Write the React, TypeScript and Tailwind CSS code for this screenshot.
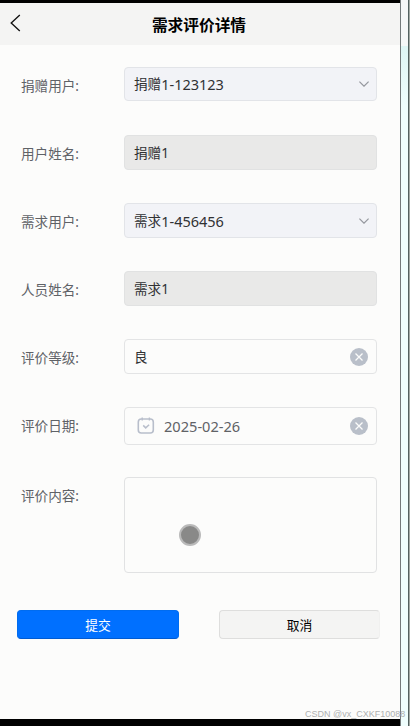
import type { ReactNode } from 'react';

function ClearIcon() {
  return (
    <svg className="block h-[18px] w-[18px] shrink-0" viewBox="0 0 18 18" fill="none">
      <circle cx="9" cy="9" r="9" fill="#b9bfc9" />
      <path d="M5.5 5.5l7 7M12.5 5.5l-7 7" stroke="#fcfcfb" strokeWidth="1.25" />
    </svg>
  );
}

function ChevronDown() {
  return (
    <svg className="block h-[6px] w-[10px] shrink-0" viewBox="0 0 10 6" fill="none">
      <path d="M.4.6L5 5.2 9.6.6" stroke="#94979d" strokeWidth="1.2" />
    </svg>
  );
}

function CalendarIcon() {
  return (
    <svg className="block h-[18px] w-[18px] shrink-0" viewBox="0 0 18 18" fill="none" stroke="#b8becb">
      <rect x="1.3" y="2" width="15" height="14" rx="3" strokeWidth="1.6" />
      <path d="M5.2 .6v3M12.4 .6v3" strokeWidth="1.4" />
      <path d="M6.2 8.4l2.5 2.5 3.4-3.2" strokeWidth="1.5" />
    </svg>
  );
}

function Row({ label, size, children }: { label: string; size: string; children: ReactNode }) {
  return (
    <div className={`flex items-start pl-[21px] ${size}`}>
      <label className="w-[103px] shrink-0 pt-[9px] text-[13.6px] leading-5 text-[#5f6267]">{label}</label>
      {children}
    </div>
  );
}

const box = 'flex w-[253px] items-center rounded-[4px] border text-[13.6px] text-[#303133] pl-[9px]';

function Value({ name, code }: { name: string; code?: string }) {
  return (
    <div className="flex flex-1 items-center leading-5">
      <span>{name}</span>
      {code && <span className="text-[14.5px]">{code}</span>}
    </div>
  );
}

export default function App() {
  return (
    <div className="relative flex h-[726px] w-[410px] overflow-hidden bg-[#effefd] font-['Noto_Sans','Noto_Sans_CJK_SC',sans-serif]">
      <main className="flex w-[400px] flex-col border-t-[3px] border-b-[7px] border-black bg-[#fcfcfb]">
        <header className="flex h-[42px] shrink-0 items-center bg-[#f4f4f3]">
          <svg className="mb-[2px] ml-[10px] block h-[18px] w-[11px]" viewBox="0 0 11 18" fill="none">
            <path d="M9.8 1L1.2 9l8.6 8" stroke="#111" strokeWidth="1.35" />
          </svg>
          <h1 className="flex-1 pt-[2px] pr-[23px] text-center text-[15.7px] leading-6 font-bold text-black">需求评价详情</h1>
        </header>

        <form className="flex flex-col pt-[22px]">
          <Row label="捐赠用户:" size="h-[68px]">
            <div className={`${box} h-[34px] border-[#e2e4e8] bg-[#f2f3f7] pr-[7px]`}>
              <Value name="捐赠" code="1-123123" />
              <ChevronDown />
            </div>
          </Row>
          <Row label="用户姓名:" size="h-[68px]">
            <div className={`${box} h-[35px] border-[#e1e2e2] bg-[#e9e9e8] pr-2`}>
              <Value name="捐赠1" />
            </div>
          </Row>
          <Row label="需求用户:" size="h-[68px]">
            <div className={`${box} h-[35px] border-[#e2e4e8] bg-[#f2f3f7] pr-[7px]`}>
              <Value name="需求" code="1-456456" />
              <ChevronDown />
            </div>
          </Row>
          <Row label="人员姓名:" size="h-[68px]">
            <div className={`${box} h-[35px] border-[#e1e2e2] bg-[#e9e9e8] pr-2`}>
              <Value name="需求1" />
            </div>
          </Row>
          <Row label="评价等级:" size="h-[68px]">
            <div className={`${box} h-[35px] border-[#e3e4e5] pr-2`}>
              <Value name="良" />
              <ClearIcon />
            </div>
          </Row>
          <Row label="评价日期:" size="h-[70px]">
            <div className={`${box} h-[38px] border-[#e3e4e5] pr-2`}>
              <div className="flex flex-1 items-center gap-[9px] pl-[3px]">
                <CalendarIcon />
                <span className="text-[14.6px] leading-5 text-[#606266]">2025-02-26</span>
              </div>
              <ClearIcon />
            </div>
          </Row>
          <Row label="评价内容:" size="h-[133px]">
            <div className="flex h-[96px] w-[253px] items-start rounded-[4px] border border-[#e1e2e3]">
              <span className="mt-[46px] ml-[54px] block h-[22px] w-[22px] rounded-full border-2 border-[#bababa] bg-[#898988]" />
            </div>
          </Row>
          <div className="flex gap-[40px] pl-[17px]">
            <button type="button" className="h-[29px] w-[162px] rounded-[4px] border border-[#006cf0] border-b-[#005bd2] bg-[#0070ff] text-[12.8px] leading-5 text-white">
              提交
            </button>
            <button type="button" className="h-[29px] w-[161px] rounded-[4px] border border-[#dededd] border-r-[#f0f0ef] bg-[#f4f4f3] text-[12.8px] leading-5 text-black">
              取消
            </button>
          </div>
        </form>
      </main>
      <aside className="flex w-[10px] flex-col border-l border-[#73797a]">
        <div className="flex h-full border-r border-[#a3aaa5]">
          <div className="flex w-[8px] flex-col border-r border-[#536160]">
            <div className="h-[46px] bg-[#f5f7f7]" />
            <div className="h-[60px] bg-linear-to-b from-[#def5f4] to-[#effefd]" />
          </div>
        </div>
      </aside>
      <span className="absolute top-[708px] left-[305px] text-[9px] leading-[13px] whitespace-nowrap text-[#aeb0b0] font-['Liberation_Sans',Arial,sans-serif]">
        CSDN @vx_CXKF10088
      </span>
    </div>
  );
}
